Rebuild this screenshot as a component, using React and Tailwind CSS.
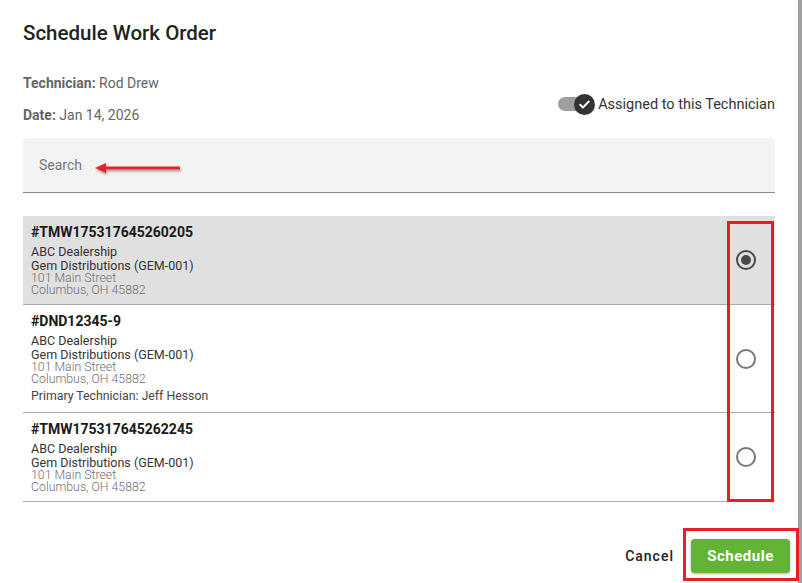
import { useState } from "react";

const orders = [
  { id: "#TMW175317645260205", primary: null },
  { id: "#DND12345-9", primary: "Jeff Hesson" },
  { id: "#TMW175317645262245", primary: null },
];

function Radio({ checked }) {
  return (
    <span
      className={
        "flex h-[20px] w-[20px] items-center justify-center rounded-full border-2 " +
        (checked ? "border-[#4a4a4a]" : "border-[#777]")
      }
    >
      {checked && <span className="h-[10px] w-[10px] rounded-full bg-[#4a4a4a]" />}
    </span>
  );
}

export default function App() {
  const [selected, setSelected] = useState(0);

  return (
    <div className="flex h-[583px] w-[802px] overflow-hidden bg-[#9b9b9b] font-['Roboto',sans-serif]">
      <div className="relative flex w-[798px] flex-col bg-white px-[23px] pt-[20px] text-[#222]">
        {/* Title */}
        <h1 className="text-[20.5px] font-medium leading-[26px] text-[#222]">Schedule Work Order</h1>

        {/* Technician / Date + toggle */}
        <div className="mt-[27px] flex items-end justify-between">
          <div>
            <p className="text-[14px] leading-[20px] text-[#666]">
              <span className="font-bold">Technician:</span> Rod Drew
            </p>
            <p className="mt-[12px] text-[14px] leading-[20px] text-[#666]">
              <span className="font-bold">Date:</span> Jan 14, 2026
            </p>
          </div>
          <div className="mb-[10px] flex items-center">
            <div className="relative h-[21px] w-[37px]">
              <span className="absolute left-0 top-[3px] h-[14px] w-[30px] rounded-full bg-[#9e9e9e]" />
              <span className="absolute right-0 top-0 flex h-[21px] w-[21px] items-center justify-center rounded-full bg-[#333]">
                <svg width="13" height="13" viewBox="0 0 24 24" fill="none" stroke="white" strokeWidth="3.4" strokeLinecap="round" strokeLinejoin="round">
                  <path d="M4 12.5l5 5L20 6.5" />
                </svg>
              </span>
            </div>
            <span className="ml-[3px] text-[14.5px] leading-[20px] text-[#333]">Assigned to this Technician</span>
          </div>
        </div>

        {/* Search */}
        <div className="relative mt-[13px] flex h-[55px] items-center rounded-t-[4px] border-b border-[#8a8a8a] bg-[#f3f3f3] px-[16px]">
          <span className="text-[14px] text-[#777]">Search</span>
          <svg className="absolute left-[70px] top-[22px]" width="92" height="18" viewBox="0 0 92 18">
            <defs>
              <filter id="sh" x="-20%" y="-100%" width="140%" height="300%">
                <feDropShadow dx="1" dy="2" stdDeviation="1.2" floodColor="#000" floodOpacity="0.35" />
              </filter>
            </defs>
            <g filter="url(#sh)">
              <path d="M10 6.5 H87 V9.5 H10 Z" fill="#e8202a" />
              <path d="M2 8 L13 3 L13 13 Z" fill="#e8202a" />
            </g>
          </svg>
        </div>

        {/* Work orders */}
        <div className="relative mt-[23px]">
          {orders.map((o, i) => (
            <div
              key={o.id}
              onClick={() => setSelected(i)}
              className={
                "flex items-center border-b border-[#aaa] pl-[8px] pr-[19px] " +
                (selected === i ? "bg-[#e0e0e0]" : "bg-white")
              }
            >
              <div className={"flex-1 pt-[7px] " + (o.primary ? "pb-[7px]" : "pb-[8px]")}>
                <p className="text-[14px] font-bold leading-[18px] text-[#1a1a1a]">{o.id}</p>
                <p className="mt-[4px] text-[12.5px] leading-[14px] text-[#333]">ABC Dealership</p>
                <p className="text-[12.5px] leading-[13px] text-[#333]">Gem Distributions (GEM-001)</p>
                <p className="text-[12.3px] font-light leading-[12px] text-[#6f6f6f]">101 Main Street</p>
                <p className="text-[12.3px] font-light leading-[12px] text-[#6f6f6f]">Columbus, OH 45882</p>
                {o.primary && (
                  <p className="mt-[2px] text-[12.3px] leading-[18px] text-[#444]">
                    Primary Technician: {o.primary}
                  </p>
                )}
              </div>
              <Radio checked={selected === i} />
            </div>
          ))}
          <div className="pointer-events-none absolute left-[704px] top-[5px] h-[281px] w-[47px] border-[3px] border-[#ec1c24]" />
        </div>

        {/* Footer */}
        <div className="-mr-[15px] mt-[37px] flex items-center justify-end">
          <button className="px-[2px] text-[14px] font-medium tracking-[1px] text-[#222]">Cancel</button>
          <div className="relative ml-[15px]">
            <button className="flex h-[34px] w-[99px] items-center justify-center rounded-[4px] bg-[#63b436] text-[15px] font-bold tracking-[0.5px] text-white shadow-[0_1px_3px_rgba(0,0,0,0.3)]">
              Schedule
            </button>
            <div className="pointer-events-none absolute -left-[8px] -top-[11px] h-[53px] w-[116px] border-[3px] border-[#ec1c24]" />
          </div>
        </div>
      </div>
      <div className="flex-1 bg-[#a0a0a0]" />
    </div>
  );
}
